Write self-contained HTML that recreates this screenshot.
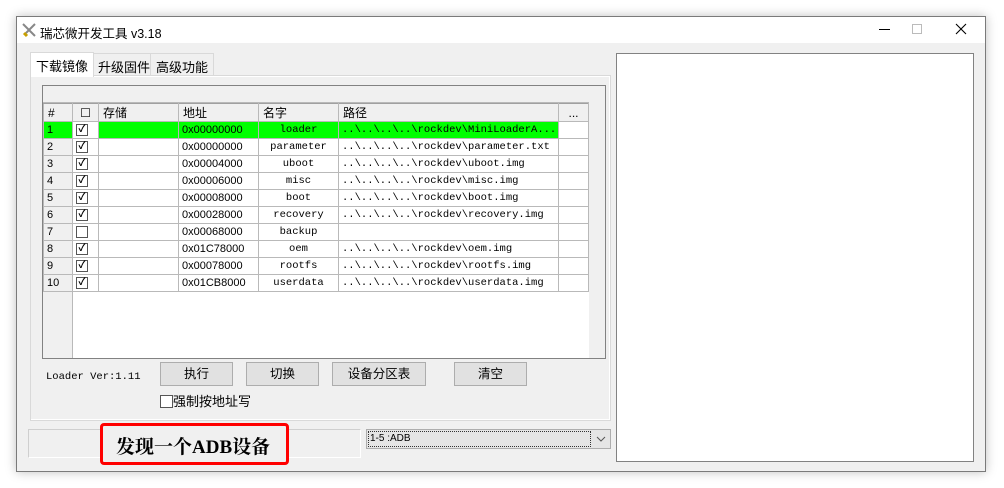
<!DOCTYPE html>
<html><head><meta charset="utf-8"><style>
*{margin:0;padding:0;box-sizing:border-box}
body{width:1004px;height:488px;background:#fff;position:relative;overflow:hidden;font-family:"Liberation Sans","Noto Sans CJK SC",sans-serif;font-size:12px;color:#000}
.a{position:absolute}
.win{left:16px;top:16px;width:970px;height:456px;background:#f0f0f0;border:1px solid #7a7a7a;box-shadow:0 0 10px rgba(0,0,0,.25)}
.title{left:0;top:0;width:968px;height:26px;background:#fff}
.tab{top:36px;height:22px;border:1px solid #d9d9d9;border-bottom:none;background:#f0f0f0;padding:3px 5px 0;font-size:13px}
.lv{left:25px;top:68px;width:564px;height:274px;background:#fff;border:1px solid #828282}
table{border-collapse:collapse;position:absolute;left:0;top:17px;font-size:11px;table-layout:fixed;width:545px}
td{height:17px;border:1px solid #b9b9b9;padding:0 3px;white-space:nowrap;overflow:hidden}
td.n{background:#f0f0f0}
td.m{font-family:"Liberation Mono","WenQuanYi Zen Hei",monospace;font-size:10.5px;text-align:center}
td.p{font-family:"Liberation Mono",monospace;font-size:10.5px}
th{height:17px;border:1px solid #b9b9b9;border-top:1px solid #a0a0a0;background:#f0f0f0;font-weight:normal;text-align:left;padding:0 4px;font-size:12px}
.cb{display:inline-block;width:12px;height:12px;border:1px solid #555;vertical-align:middle;background:#fff;font-size:10px;line-height:10px;text-align:center;font-weight:bold}
.btn{top:345px;height:24px;background:#e1e1e1;border:1px solid #adadad;text-align:center;line-height:22px;font-size:12.5px}
tr.g td{background:#00ff00}
tr.g td.w{background:#fff}
</style></head><body>
<div class="a win">
 <div class="a title">
  <svg class="a" style="left:4px;top:5px" width="16" height="16"><path d="M2 2L14 14M14 2L5 11" stroke="#888" stroke-width="2"/><path d="M3 11l3 3" stroke="#c8a000" stroke-width="3"/></svg>
  <div class="a" style="left:23px;top:6px;font-size:12.5px">瑞芯微开发工具 v3.18</div>
  <div class="a" style="left:862px;top:12px;width:11px;height:1px;background:#000"></div>
  <div class="a" style="left:895px;top:7px;width:10px;height:10px;border:1px solid #bbb"></div>
  <svg class="a" style="left:938px;top:6px" width="12" height="12"><path d="M1 1L11 11M11 1L1 11" stroke="#000" stroke-width="1.1"/></svg>
 </div>
 <div class="a tab" style="left:13px;top:35px;height:25px;background:#fff;z-index:2">下载镜像</div>
 <div class="a tab" style="left:75px;">升级固件</div>
 <div class="a tab" style="left:133px;">高级功能</div>
 <div class="a" style="left:13px;top:58px;width:581px;height:346px;background:#fff;border:1px solid #d9d9d9"></div>
 <div class="a" style="left:14px;top:60px;width:578px;height:342px;background:#f0f0f0"></div>
 <div class="a lv">
  <div class="a" style="left:0;top:0;width:562px;height:17px;background:#f0f0f0;border-bottom:1px solid #b9b9b9"></div>
  <div class="a" style="left:546px;top:0;width:16px;height:272px;background:#f0f0f0"></div>
  <div class="a" style="left:0;top:17px;width:30px;height:255px;background:#f0f0f0;border-right:1px solid #b9b9b9"></div>
  <table>
   <colgroup><col style="width:29px"><col style="width:26px"><col style="width:80px"><col style="width:80px"><col style="width:80px"><col style="width:220px"><col style="width:30px"></colgroup>
   <tr><th>#</th><th style="text-align:center">☐</th><th>存储</th><th>地址</th><th>名字</th><th>路径</th><th style="text-align:center">...</th></tr>
   <tr class="g"><td>1</td><td class="w"><span class="cb">✓</span></td><td></td><td>0x00000000</td><td class="m">loader</td><td class="p">..\..\..\..\rockdev\MiniLoaderA...</td><td class="w"></td></tr>
   <tr><td class="n">2</td><td><span class="cb">✓</span></td><td></td><td>0x00000000</td><td class="m">parameter</td><td class="p">..\..\..\..\rockdev\parameter.txt</td><td></td></tr>
   <tr><td class="n">3</td><td><span class="cb">✓</span></td><td></td><td>0x00004000</td><td class="m">uboot</td><td class="p">..\..\..\..\rockdev\uboot.img</td><td></td></tr>
   <tr><td class="n">4</td><td><span class="cb">✓</span></td><td></td><td>0x00006000</td><td class="m">misc</td><td class="p">..\..\..\..\rockdev\misc.img</td><td></td></tr>
   <tr><td class="n">5</td><td><span class="cb">✓</span></td><td></td><td>0x00008000</td><td class="m">boot</td><td class="p">..\..\..\..\rockdev\boot.img</td><td></td></tr>
   <tr><td class="n">6</td><td><span class="cb">✓</span></td><td></td><td>0x00028000</td><td class="m">recovery</td><td class="p">..\..\..\..\rockdev\recovery.img</td><td></td></tr>
   <tr><td class="n">7</td><td><span class="cb"></span></td><td></td><td>0x00068000</td><td class="m">backup</td><td class="p"></td><td></td></tr>
   <tr><td class="n">8</td><td><span class="cb">✓</span></td><td></td><td>0x01C78000</td><td class="m">oem</td><td class="p">..\..\..\..\rockdev\oem.img</td><td></td></tr>
   <tr><td class="n">9</td><td><span class="cb">✓</span></td><td></td><td>0x00078000</td><td class="m">rootfs</td><td class="p">..\..\..\..\rockdev\rootfs.img</td><td></td></tr>
   <tr><td class="n">10</td><td><span class="cb">✓</span></td><td></td><td>0x01CB8000</td><td class="m">userdata</td><td class="p">..\..\..\..\rockdev\userdata.img</td><td></td></tr>
  </table>
 </div>
 <div class="a" style="left:29px;top:354px;font-family:'Liberation Mono',monospace;font-size:10.5px">Loader Ver:1.11</div>
 <div class="a btn" style="left:143px;width:73px">执行</div>
 <div class="a btn" style="left:229px;width:73px">切换</div>
 <div class="a btn" style="left:315px;width:94px">设备分区表</div>
 <div class="a btn" style="left:437px;width:73px">清空</div>
 <div class="a" style="left:143px;top:374px;font-size:13px"><span class="cb" style="width:13px;height:13px;vertical-align:-2px"></span>强制按地址写</div>
 <div class="a" style="left:11px;top:412px;width:333px;height:29px;border:1px solid #cfcfcf;border-right-color:#fff;border-bottom-color:#fff"></div>
 <div class="a" style="left:349px;top:412px;width:245px;height:20px;background:#e5e5e5;border:1px solid #adadad">
  <div class="a" style="left:1px;top:1px;width:223px;height:16px;border:1px dotted #333;font-size:10px;line-height:14px;padding-left:1px;font-family:'Liberation Sans Narrow','Liberation Sans',sans-serif">1-5 :ADB</div>
  <svg class="a" style="left:229px;top:6px" width="10" height="6"><path d="M1 1l4 4 4-4" stroke="#555" fill="none"/></svg>
 </div>
 <div class="a" style="left:599px;top:36px;width:358px;height:409px;background:#fff;border:1px solid #828282"></div>
</div>
<div class="a" style="left:100px;top:423px;width:189px;height:42px;border:3px solid #f00;border-radius:4px;background:#f0f0f0"></div>
<div class="a" style="left:116px;top:432px;font-family:'Liberation Serif','Noto Serif CJK SC',serif;font-weight:bold;font-size:19px">发现一个ADB设备</div>
</body></html>
